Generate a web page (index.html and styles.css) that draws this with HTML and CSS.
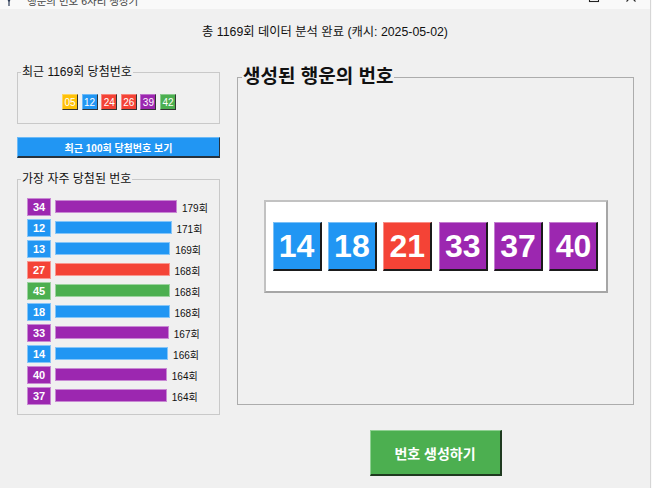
FILE: index.html
```html
<!DOCTYPE html>
<html lang="ko">
<head>
  <meta charset="UTF-8">
  <meta name="viewport" content="width=device-width, initial-scale=1.0">
  <title>행운의 번호 6자리 생성기</title>
  <link rel="stylesheet" href="styles.css">
</head>
<body>
  <div class="window">
    <div class="titlebar">
      <div class="titlebar-inner">
        <svg class="app-icon" width="10" height="16" viewBox="0 0 10 16">
          <path d="M5 1 C8 3 8 8 5 11 C2 8 2 3 5 1 Z" fill="#2b3a55"/>
          <path d="M5 9 L5 15" stroke="#2b3a55" stroke-width="1.2"/>
        </svg>
        <span class="title-text">행운의 번호 6자리 생성기</span>
        <div class="controls">
          <svg class="ctl" width="12" height="12" viewBox="0 0 12 12"><path d="M1 6 H11" stroke="#222" stroke-width="1.2"/></svg>
          <svg class="ctl" width="12" height="12" viewBox="0 0 12 12"><rect x="1.5" y="1.5" width="9" height="9" fill="none" stroke="#222" stroke-width="1.1"/></svg>
          <svg class="ctl" width="12" height="12" viewBox="0 0 12 12"><path d="M1.5 1.5 L10.5 10.5 M10.5 1.5 L1.5 10.5" stroke="#222" stroke-width="1.1"/></svg>
        </div>
      </div>
    </div>

    <div class="content">
      <div class="summary">총 1169회 데이터 분석 완료 (캐시: 2025-05-02)</div>

      <div class="main">
        <div class="sidebar">
          <fieldset class="group latest">
            <legend>최근 1169회 당첨번호</legend>
            <div class="mini-balls">
              <span class="mini yellow">05</span>
              <span class="mini blue">12</span>
              <span class="mini red">24</span>
              <span class="mini red">26</span>
              <span class="mini purple">39</span>
              <span class="mini green">42</span>
            </div>
          </fieldset>

          <button class="btn-history">최근 100회 당첨번호 보기</button>

          <fieldset class="group freq">
            <legend>가장 자주 당첨된 번호</legend>
            <div class="freq-list">
              <div class="freq-row"><span class="badge purple">34</span><span class="bar purple" style="width: 122px"></span><span class="count">179회</span></div>
              <div class="freq-row"><span class="badge blue">12</span><span class="bar blue" style="width: 116.5px"></span><span class="count">171회</span></div>
              <div class="freq-row"><span class="badge blue">13</span><span class="bar blue" style="width: 115.2px"></span><span class="count">169회</span></div>
              <div class="freq-row"><span class="badge red">27</span><span class="bar red" style="width: 114.5px"></span><span class="count">168회</span></div>
              <div class="freq-row"><span class="badge green">45</span><span class="bar green" style="width: 114.5px"></span><span class="count">168회</span></div>
              <div class="freq-row"><span class="badge blue">18</span><span class="bar blue" style="width: 114.5px"></span><span class="count">168회</span></div>
              <div class="freq-row"><span class="badge purple">33</span><span class="bar purple" style="width: 113.8px"></span><span class="count">167회</span></div>
              <div class="freq-row"><span class="badge blue">14</span><span class="bar blue" style="width: 113.1px"></span><span class="count">166회</span></div>
              <div class="freq-row"><span class="badge purple">40</span><span class="bar purple" style="width: 111.8px"></span><span class="count">164회</span></div>
              <div class="freq-row"><span class="badge purple">37</span><span class="bar purple" style="width: 111.8px"></span><span class="count">164회</span></div>
            </div>
          </fieldset>
        </div>

        <div class="result-col">
          <fieldset class="group result">
            <legend>생성된 행운의 번호</legend>
            <div class="ball-area">
              <div class="ball-box">
                <span class="ball blue">14</span>
                <span class="ball blue">18</span>
                <span class="ball red">21</span>
                <span class="ball purple">33</span>
                <span class="ball purple">37</span>
                <span class="ball purple">40</span>
              </div>
            </div>
          </fieldset>
          <button class="btn-generate">번호 생성하기</button>
        </div>
      </div>
    </div>
  </div>
</body>
</html>
```

FILE: styles.css
```css
:root {
  --color-window: #f0f0f0;
  --color-yellow: #FFC107;
  --color-blue: #2196F3;
  --color-red: #F44336;
  --color-purple: #9C27B0;
  --color-green: #4CAF50;
  --font-main: "Liberation Sans", "Noto Sans CJK KR", sans-serif;
}

html, body {
  margin: 0;
  padding: 0;
  background-color: #fafafa;
}

body {
  font-family: var(--font-main);
  font-size: 12px;
  color: #111;
}

.window {
  width: 650px;
  height: 488px;
  background-color: var(--color-window);
  border-right: 1px solid #d6d6d6;
  overflow: hidden;
}

/* title bar, cropped at the top of the shot */
.titlebar {
  height: 9px;
  overflow: hidden;
  background-color: #f9f9f9;
}

.titlebar-inner {
  height: 30px;
  margin-top: -15px;
  display: flex;
  align-items: center;
  padding-left: 4px;
}

.app-icon {
  margin-top: -2px;
}

.title-text {
  margin-left: 13px;
  font-size: 10.5px;
  color: #444;
}

.controls {
  margin-left: auto;
  display: flex;
  align-items: center;
  gap: 25px;
  padding-right: 13px;
  margin-top: -6px;
}

.content {
  padding: 0 17px;
}

.summary {
  text-align: center;
  line-height: 16px;
  padding-top: 15px;
  margin-bottom: 24px;
  font-size: 12.3px;
  color: #111;
}

.main {
  display: flex;
  gap: 17px;
  align-items: flex-start;
}

.sidebar {
  width: 203px;
  display: flex;
  flex-direction: column;
}

/* group boxes */
.group {
  margin: 0;
  border: 1px solid #c9c9c9;
  min-width: 0;
}

.group legend {
  padding: 0 1px;
  margin-left: 3px;
  line-height: 16px;
  font-size: 12px;
  color: #111;
}

.latest {
  padding: 14px 0 13px;
}

.mini-balls {
  display: flex;
  justify-content: center;
  gap: 3.6px;
  padding-left: 1px;
}

.mini {
  width: 16px;
  height: 16px;
  box-sizing: border-box;
  display: flex;
  align-items: center;
  justify-content: center;
  font-size: 10px;
  color: #fff;
  border-top: 1px solid rgba(255, 255, 255, 0.35);
  border-left: 1px solid rgba(255, 255, 255, 0.35);
  border-right: 1px solid #333;
  border-bottom: 1px solid #333;
}

.yellow { background-color: var(--color-yellow); }
.blue { background-color: var(--color-blue); }
.red { background-color: var(--color-red); }
.purple { background-color: var(--color-purple); }
.green { background-color: var(--color-green); }

.btn-history {
  margin-top: 13px;
  height: 21px;
  width: 203px;
  padding: 0;
  background-color: var(--color-blue);
  color: #fff;
  font-family: var(--font-main);
  font-size: 10px;
  font-weight: 700;
  border-top: 1px solid #6cbaf7;
  border-left: 1px solid #6cbaf7;
  border-right: 1px solid #26323d;
  border-bottom: 2px solid #26323d;
  cursor: pointer;
}

.freq {
  margin-top: 13px;
  padding: 11px 0 9px 0;
}

.freq-list {
  display: flex;
  flex-direction: column;
  gap: 3px;
  padding-left: 9px;
}

.freq-row {
  display: flex;
  align-items: center;
  height: 18px;
}

.badge {
  width: 24px;
  height: 18px;
  box-sizing: border-box;
  display: flex;
  align-items: center;
  justify-content: center;
  font-size: 11px;
  font-weight: 700;
  color: #fff;
  border: 1px solid rgba(255, 255, 255, 0.45);
}

.bar {
  height: 13px;
  margin-left: 4px;
  margin-top: -1px;
  box-sizing: border-box;
  border: 1px solid rgba(255, 255, 255, 0.45);
}

.count {
  margin-left: 5px;
  font-size: 10px;
  color: #111;
}

.result-col {
  width: 397px;
  margin-top: 1px;
  display: flex;
  flex-direction: column;
  align-items: center;
}

.result {
  width: 397px;
  box-sizing: border-box;
  padding: 0;
  border-color: #acacac;
}

.result legend {
  font-size: 19px;
  font-weight: 700;
  line-height: 24px;
  margin-left: 4px;
}

.ball-area {
  height: 315px;
  display: flex;
  align-items: center;
  justify-content: center;
  padding-left: 1px;
}

.ball-box {
  display: flex;
  gap: 6.4px;
  padding: 20px 8px 20px 7px;
  background-color: #fff;
  border-top: 2px solid #c2c2c2;
  border-left: 2px solid #c2c2c2;
  border-right: 2px solid #a6a6a6;
  border-bottom: 2px solid #a6a6a6;
}

.ball {
  width: 49px;
  height: 49px;
  box-sizing: border-box;
  display: flex;
  align-items: center;
  justify-content: center;
  font-size: 32px;
  font-weight: 700;
  color: #fff;
  border-top: 1px solid rgba(255, 255, 255, 0.4);
  border-left: 1px solid rgba(255, 255, 255, 0.4);
  border-right: 2px solid #1b1b1b;
  border-bottom: 2px solid #1b1b1b;
}

.btn-generate {
  margin-top: 25px;
  width: 132px;
  height: 46px;
  padding: 0;
  background-color: var(--color-green);
  color: #fff;
  font-family: var(--font-main);
  font-size: 14px;
  font-weight: 700;
  border-top: 1px solid #8fd092;
  border-left: 1px solid #8fd092;
  border-right: 2px solid #1f3a20;
  border-bottom: 2px solid #1f3a20;
  cursor: pointer;
}
```
